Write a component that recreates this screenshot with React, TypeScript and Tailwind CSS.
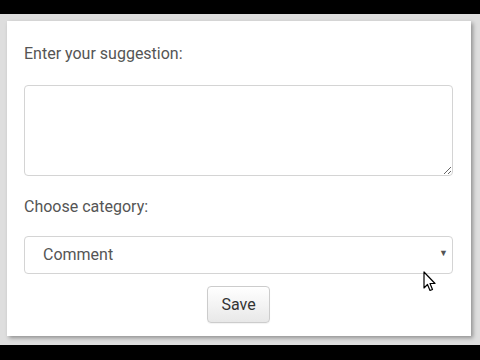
import React from 'react';

const App: React.FC = () => {
    return (
        <div className="w-[480px] h-[360px] flex flex-col bg-black overflow-hidden" style={{ fontFamily: 'Roboto, "Liberation Sans", sans-serif' }}>
            <div className="h-[14px] bg-black" />
            {/* Gray backdrop behind the form card */}
            <div className="h-[331px] bg-[#dedede] pl-[7px] pt-[7px] pr-[9px] pb-[9px] flex relative">
                <div className="flex-1 bg-white shadow-[2px_2px_4px_rgba(0,0,0,0.35)] pl-[17px] pr-[18px] pt-[21px] flex flex-col">
                    <label className="text-[16px] leading-[24px] text-[#555]">Enter your suggestion:</label>
                    <textarea className="mt-[19px] h-[91px] w-full rounded-[4px] border border-[#d4d4d4] bg-white resize-y outline-none" />
                    <label className="mt-[19px] text-[16px] leading-[24px] text-[#555]">Choose category:</label>
                    <div className="relative mt-[17px]">
                        <select
                            defaultValue="Comment"
                            className="appearance-none w-full h-[38px] rounded-[4px] border border-[#d4d4d4] bg-white pl-[18px] text-[16px] text-[#555] outline-none"
                        >
                            <option>Comment</option>
                            <option>Bug</option>
                            <option>Feature</option>
                        </select>
                        <span className="absolute right-[5px] top-[13px] text-[9px] leading-none text-[#555] pointer-events-none">▼</span>
                    </div>
                    <div className="flex justify-center mt-[12px]">
                        <button className="w-[63px] h-[37px] rounded-[4px] border border-[#ccc] bg-gradient-to-b from-white to-[#e8e8e8] text-[16px] text-[#333] shadow-[0_1px_1px_rgba(0,0,0,0.05)]">
                            Save
                        </button>
                    </div>
                </div>
                {/* Mouse pointer */}
                <svg className="absolute left-[423px] top-[257px]" width="14" height="22" viewBox="0 0 14 22">
                    <path d="M1 1 L1 17 L4.5 13.5 L7 19.5 L9.5 18.5 L7 12.5 L12 12.5 Z" fill="white" stroke="black" strokeWidth="1.2" strokeLinejoin="round" />
                </svg>
            </div>
            <div className="flex-1 bg-black" />
        </div>
    );
};

export default App;
